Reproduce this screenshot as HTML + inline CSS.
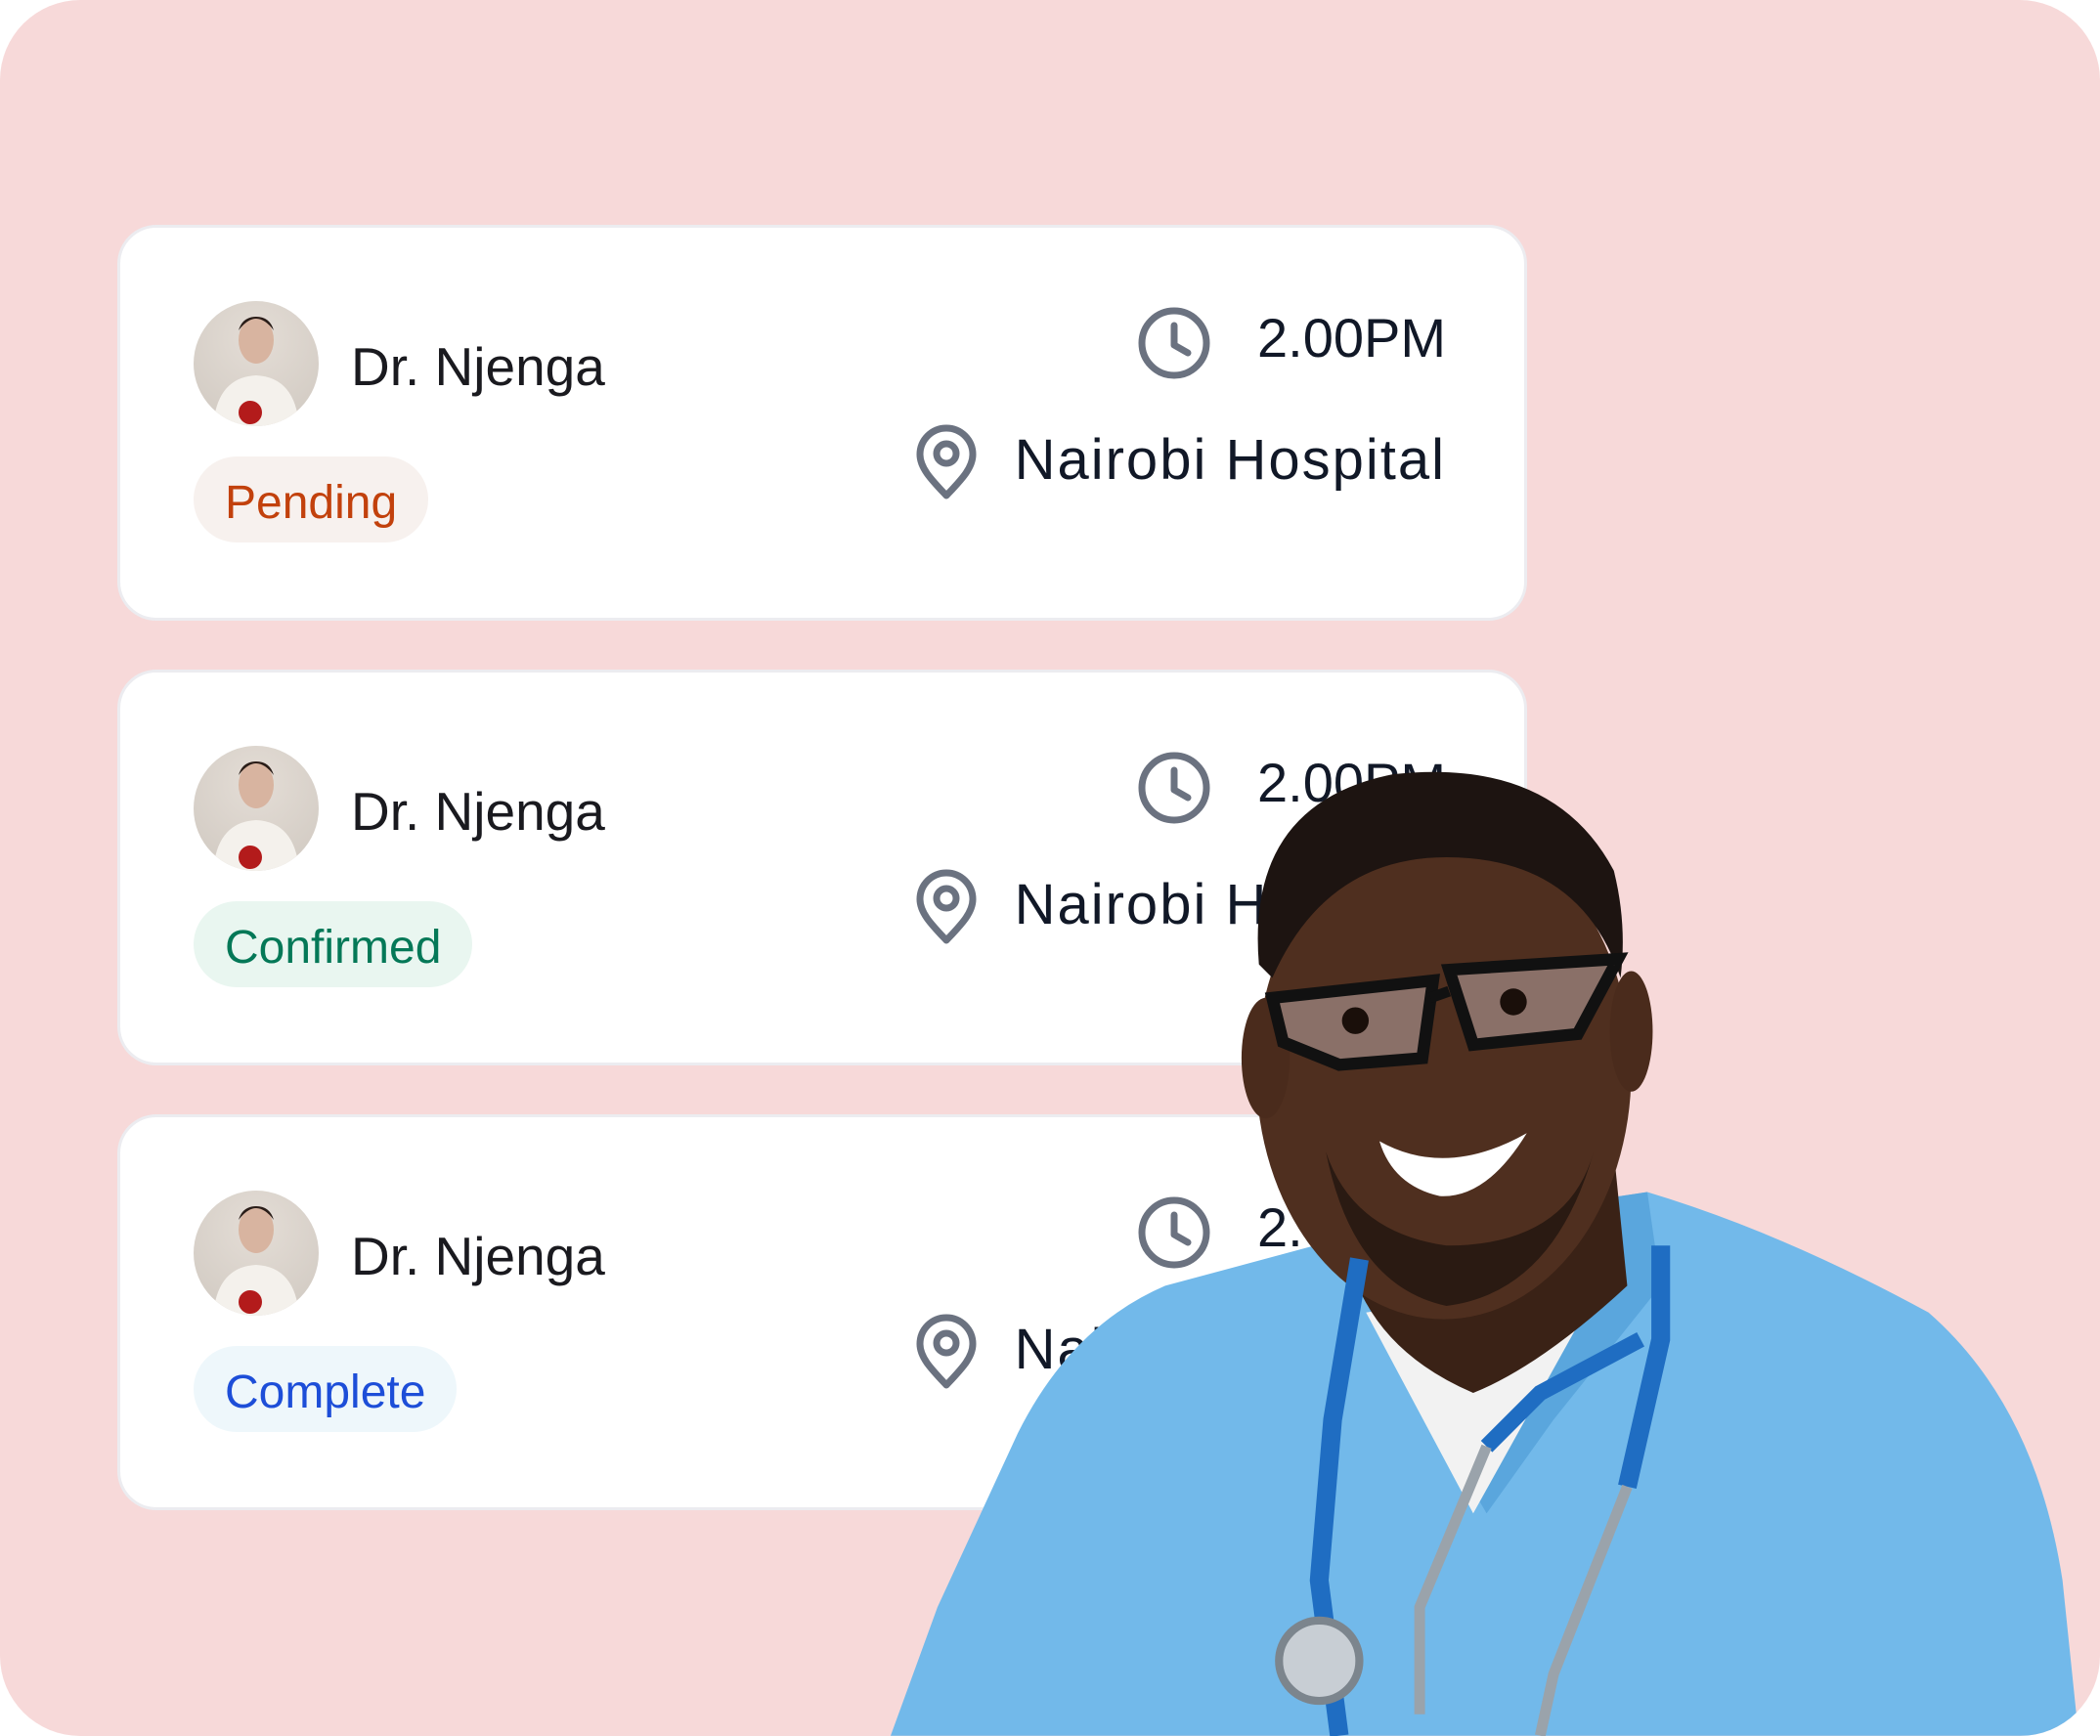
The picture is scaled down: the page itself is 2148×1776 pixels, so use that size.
<!DOCTYPE html>
<html><head><meta charset="utf-8"><style>
html,body{margin:0;padding:0;background:#fff}
.bg{position:absolute;left:0;top:0;width:2148px;height:1776px;background:#f7d9d9;border-radius:82px;overflow:hidden}
.card{position:absolute;left:120px;width:1442px;height:405px;background:#fff;border:3px solid #ececf0;border-radius:40px;box-sizing:border-box}
.av{position:absolute;left:75px;top:75px;width:128px;height:128px;border-radius:50%;background:radial-gradient(circle at 50% 30%,#e4ddd6,#cfc8c0);overflow:hidden}
.name{position:absolute;left:236px;top:110px;font:55px "Liberation Sans",sans-serif;color:#1a1a1f}
.pill{position:absolute;left:75px;top:234px;height:88px;border-radius:44px;font:48px "Liberation Sans",sans-serif;line-height:96px;padding:0 32px}
.time{position:absolute;right:80px;top:80px;font:56px "Liberation Sans",sans-serif;color:#111827}
.loc{position:absolute;right:80px;top:204px;font:58px "Liberation Sans",sans-serif;color:#111827;letter-spacing:2px}
.ic{position:absolute}
</style></head><body>
<div class="bg">
<div class="card" style="top:230px">
 <div class="av"><svg width="128" height="128"><ellipse cx="64" cy="40" rx="18" ry="24" fill="#d8b4a0"/><path d="M46 30q18-24 36 0q-4-14-18-14t-18 14z" fill="#2a1d18"/><path d="M20 128q4-50 44-52q40 2 44 52z" fill="#f4f1ec"/><circle cx="58" cy="114" r="12" fill="#b31b1b"/></svg></div>
 <div class="name">Dr. Njenga</div>
 <div class="pill" style="background:#f7f1ee;color:#c2410c">Pending</div>
 <svg class="ic" style="left:1040px;top:80px" width="80" height="80" viewBox="0 0 80 80"><circle cx="38" cy="38" r="33" fill="none" stroke="#6b7280" stroke-width="7"/><path d="M38 20v20l14 8" fill="none" stroke="#6b7280" stroke-width="7" stroke-linecap="round" stroke-linejoin="round"/></svg>
 <div class="time">2.00PM</div>
 <svg class="ic" style="left:810px;top:200px" width="80" height="80" viewBox="0 0 80 80"><path d="M35 74C20 58 8 46 8 32a27 27 0 0154 0c0 14-12 26-27 42z" fill="none" stroke="#6b7280" stroke-width="7" stroke-linejoin="round"/><circle cx="35" cy="31" r="10" fill="none" stroke="#6b7280" stroke-width="7"/></svg>
 <div class="loc">Nairobi Hospital</div>
</div>
<div class="card" style="top:685px">
 <div class="av"><svg width="128" height="128"><ellipse cx="64" cy="40" rx="18" ry="24" fill="#d8b4a0"/><path d="M46 30q18-24 36 0q-4-14-18-14t-18 14z" fill="#2a1d18"/><path d="M20 128q4-50 44-52q40 2 44 52z" fill="#f4f1ec"/><circle cx="58" cy="114" r="12" fill="#b31b1b"/></svg></div>
 <div class="name">Dr. Njenga</div>
 <div class="pill" style="background:#e9f6f0;color:#047857">Confirmed</div>
 <svg class="ic" style="left:1040px;top:80px" width="80" height="80" viewBox="0 0 80 80"><circle cx="38" cy="38" r="33" fill="none" stroke="#6b7280" stroke-width="7"/><path d="M38 20v20l14 8" fill="none" stroke="#6b7280" stroke-width="7" stroke-linecap="round" stroke-linejoin="round"/></svg>
 <div class="time">2.00PM</div>
 <svg class="ic" style="left:810px;top:200px" width="80" height="80" viewBox="0 0 80 80"><path d="M35 74C20 58 8 46 8 32a27 27 0 0154 0c0 14-12 26-27 42z" fill="none" stroke="#6b7280" stroke-width="7" stroke-linejoin="round"/><circle cx="35" cy="31" r="10" fill="none" stroke="#6b7280" stroke-width="7"/></svg>
 <div class="loc">Nairobi Hospital</div>
</div>
<div class="card" style="top:1140px">
 <div class="av"><svg width="128" height="128"><ellipse cx="64" cy="40" rx="18" ry="24" fill="#d8b4a0"/><path d="M46 30q18-24 36 0q-4-14-18-14t-18 14z" fill="#2a1d18"/><path d="M20 128q4-50 44-52q40 2 44 52z" fill="#f4f1ec"/><circle cx="58" cy="114" r="12" fill="#b31b1b"/></svg></div>
 <div class="name">Dr. Njenga</div>
 <div class="pill" style="background:#eef7fb;color:#1d4ed8">Complete</div>
 <svg class="ic" style="left:1040px;top:80px" width="80" height="80" viewBox="0 0 80 80"><circle cx="38" cy="38" r="33" fill="none" stroke="#6b7280" stroke-width="7"/><path d="M38 20v20l14 8" fill="none" stroke="#6b7280" stroke-width="7" stroke-linecap="round" stroke-linejoin="round"/></svg>
 <div class="time">2.00PM</div>
 <svg class="ic" style="left:810px;top:200px" width="80" height="80" viewBox="0 0 80 80"><path d="M35 74C20 58 8 46 8 32a27 27 0 0154 0c0 14-12 26-27 42z" fill="none" stroke="#6b7280" stroke-width="7" stroke-linejoin="round"/><circle cx="35" cy="31" r="10" fill="none" stroke="#6b7280" stroke-width="7"/></svg>
 <div class="loc">Nairobi Hospital</div>
</div>
<svg style="position:absolute;left:0;top:0" width="2148" height="1776" viewBox="0 0 1568 1296">
 <path d="M665 1296L700 1200L760 1070Q800 990 870 960L1000 925L1230 890Q1330 920 1440 980Q1520 1050 1540 1180L1552 1296Z" fill="#72b9ea"/>
 <path d="M1000 925L1230 890L1240 960L1160 1060L1110 1130L1040 1010Z" fill="#5aa6dd"/>
 <path d="M1020 980L1200 950L1100 1130Z" fill="#f2f2f2"/>
 <path d="M1005 880L1205 860L1215 960Q1150 1020 1100 1040Q1030 1010 1010 950Z" fill="#3a2216"/>
 <ellipse cx="1078" cy="800" rx="140" ry="185" fill="#4f2f1f"/>
 <ellipse cx="945" cy="790" rx="18" ry="45" fill="#4a2b1c"/>
 <ellipse cx="1218" cy="770" rx="16" ry="45" fill="#4a2b1c"/>
 <path d="M940 720Q930 600 1040 578Q1160 565 1205 650Q1215 690 1210 730Q1180 640 1080 640Q990 640 950 730Z" fill="#1d1411"/>
 <path d="M990 860Q1010 960 1080 975Q1160 965 1190 860Q1170 930 1080 930Q1010 920 990 860Z" fill="#2a1a12"/>
 <path d="M950 745L1070 732L1062 790L1000 795L958 778Z" fill="#8a7068" stroke="#111" stroke-width="9"/>
 <path d="M1082 724L1208 716L1178 772L1100 780Z" fill="#8a7068" stroke="#111" stroke-width="9"/>
 <circle cx="1012" cy="762" r="10" fill="#1a0f0a"/><circle cx="1130" cy="748" r="10" fill="#1a0f0a"/>
 <path d="M1068 745L1082 740" stroke="#111" stroke-width="8"/>
 <path d="M1030 852Q1080 880 1140 846Q1110 895 1075 893Q1040 885 1030 852Z" fill="#fff"/>
 <path d="M1000 1296L985 1180L995 1060L1015 940" fill="none" stroke="#1f6dc2" stroke-width="14"/>
 <path d="M1215 1110L1240 1000L1240 930" fill="none" stroke="#1f6dc2" stroke-width="14"/>
 <path d="M1110 1080L1150 1040L1225 1000" fill="none" stroke="#1f6dc2" stroke-width="12"/>
 <path d="M1110 1080L1060 1200L1060 1280M1215 1110L1160 1250L1150 1296" fill="none" stroke="#9aa3ab" stroke-width="8"/>
 <circle cx="985" cy="1240" r="30" fill="#c8ced4" stroke="#7c858d" stroke-width="6"/>
</svg>
</div>
</body></html>
